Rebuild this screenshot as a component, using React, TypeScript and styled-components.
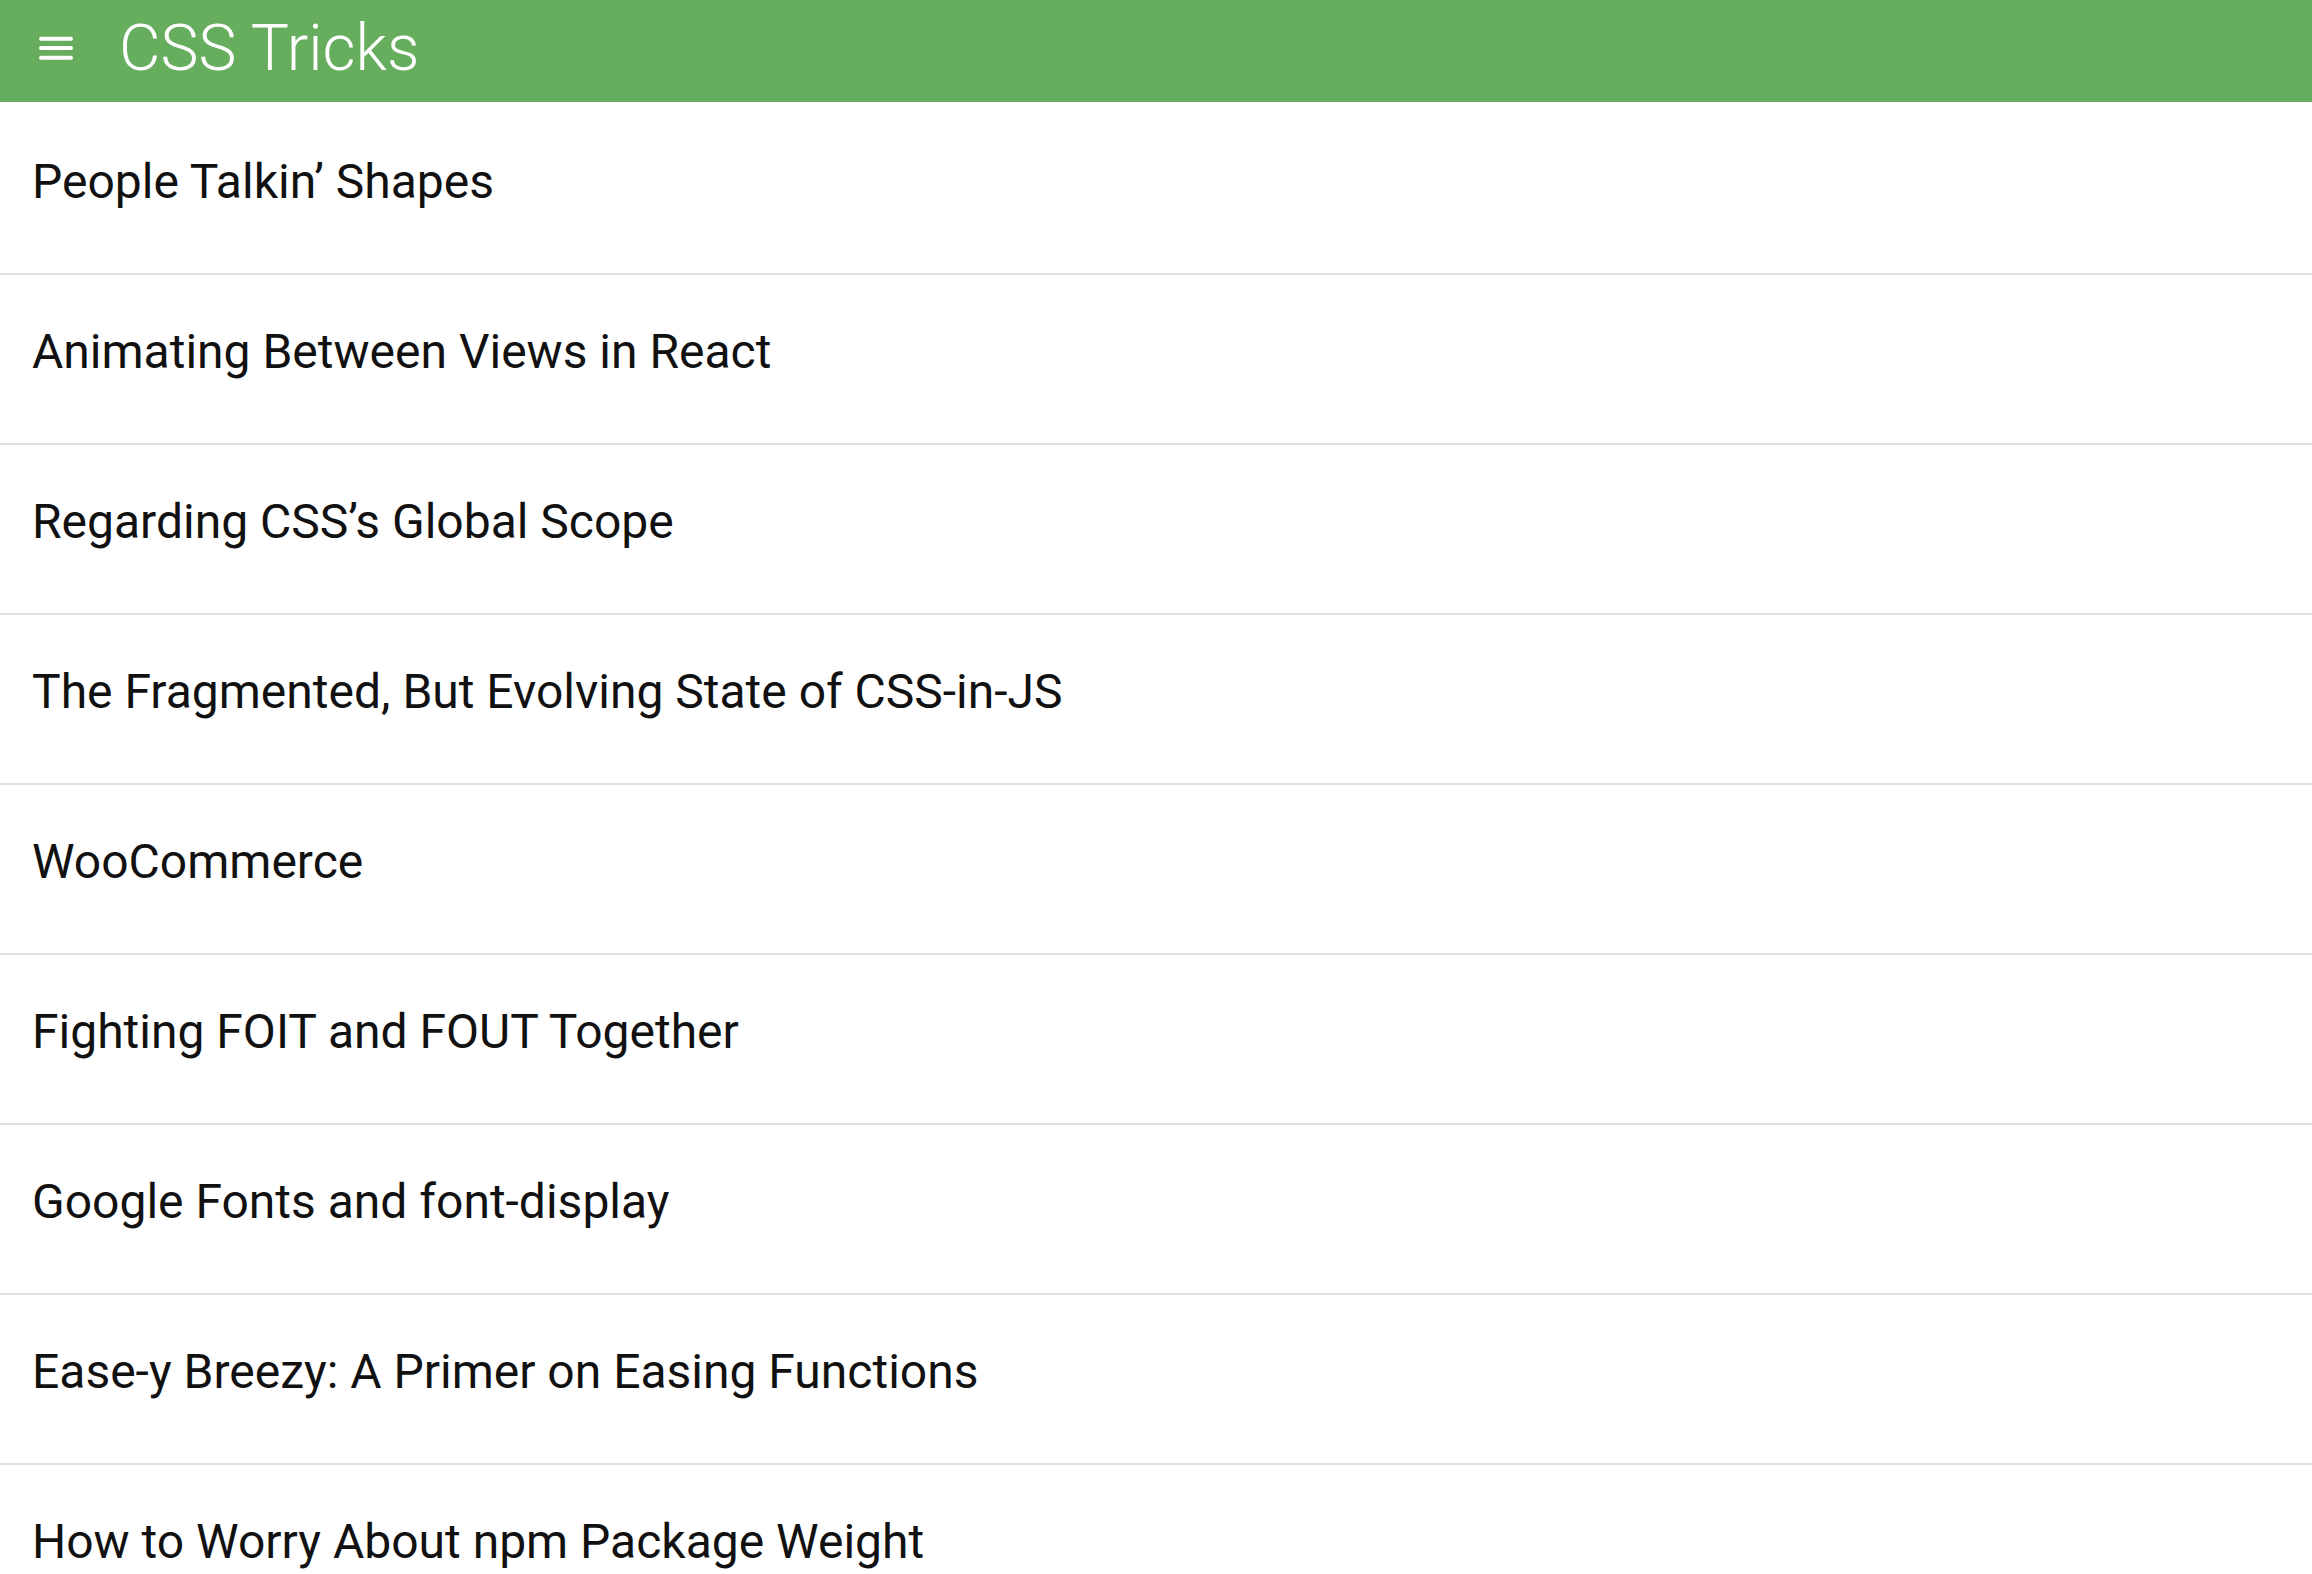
import * as React from "react";
import styled, { createGlobalStyle } from "styled-components";

const GlobalStyle = createGlobalStyle`
  html, body {
    margin: 0;
    padding: 0;
    background: #ffffff;
    font-family: Roboto, "Liberation Sans", Arial, sans-serif;
  }
`;

const Page = styled.div`
  width: 100%;
  min-height: 100vh;
  background: #ffffff;
`;

const AppBar = styled.header`
  height: 96px;
  padding-bottom: 6px;
  background-color: #66ad5e;
  display: flex;
  flex-direction: row;
  align-items: center;
  color: #ffffff;
`;

const MenuButton = styled.div`
  margin-left: 39px;
  width: 34px;
  height: 24px;
  display: flex;
  align-items: center;
  cursor: pointer;
`;

const Title = styled.h1`
  margin: 0 0 0 46px;
  font-size: 64px;
  font-weight: 300;
  line-height: normal;
  letter-spacing: 0;
`;

const List = styled.ul`
  list-style: none;
  margin: 0;
  padding: 3px 0 0 0;
`;

const Item = styled.li`
  height: 168px;
  box-sizing: content-box;
  padding: 0 32px;
  border-bottom: 2px solid #e0e0e0;
  display: flex;
  flex-direction: column;
`;

const ItemText = styled.span`
  padding-top: 49px;
  font-size: 48px;
  line-height: 56px;
  font-weight: 400;
  color: #111111;
  white-space: nowrap;
`;

const MenuIcon = () => (
  <svg width="34" height="24" viewBox="0 0 34 24" fill="#ffffff">
    <rect x="0" y="0.7" width="34" height="4" rx="2" />
    <rect x="0" y="10" width="34" height="4" rx="2" />
    <rect x="0" y="19.7" width="34" height="4" rx="2" />
  </svg>
);

const posts = [
  "People Talkin\u2019 Shapes",
  "Animating Between Views in React",
  "Regarding CSS\u2019s Global Scope",
  "The Fragmented, But Evolving State of CSS-in-JS",
  "WooCommerce",
  "Fighting FOIT and FOUT Together",
  "Google Fonts and font-display",
  "Ease-y Breezy: A Primer on Easing Functions",
  "How to Worry About npm Package Weight",
];

export default function App() {
  return (
    <Page>
      <GlobalStyle />
      <AppBar>
        <MenuButton>
          <MenuIcon />
        </MenuButton>
        <Title>CSS Tricks</Title>
      </AppBar>
      <List>
        {posts.map(title => (
          <Item key={title}>
            <ItemText>{title}</ItemText>
          </Item>
        ))}
      </List>
    </Page>
  );
}
